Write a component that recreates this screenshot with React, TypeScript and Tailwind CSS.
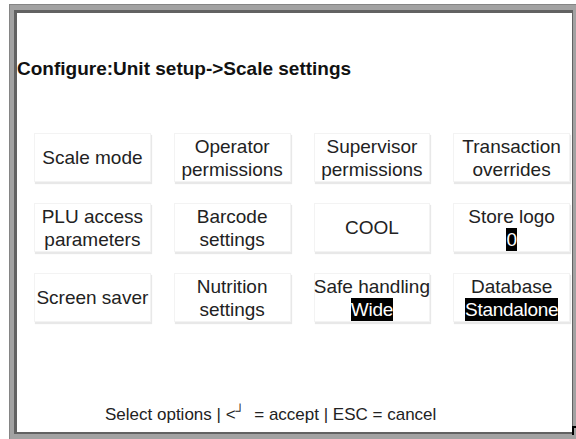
import React from "react";

const font = { fontFamily: '"Liberation Sans", Arial, sans-serif' };

type Item = { lines: string[]; value?: string };

const items: Item[] = [
  { lines: ["Scale mode"] },
  { lines: ["Operator", "permissions"] },
  { lines: ["Supervisor", "permissions"] },
  { lines: ["Transaction", "overrides"] },
  { lines: ["PLU access", "parameters"] },
  { lines: ["Barcode", "settings"] },
  { lines: ["COOL"] },
  { lines: ["Store logo"], value: "0" },
  { lines: ["Screen saver"] },
  { lines: ["Nutrition", "settings"] },
  { lines: ["Safe handling"], value: "Wide" },
  { lines: ["Database"], value: "Standalone" },
];

function Btn({ item }: { item: Item }) {
  return (
    <div className="h-[49px] bg-white border border-[#f3f3f3] shadow-[1px_2px_1px_rgba(0,0,0,0.09)] flex flex-col items-center justify-center text-[19px] leading-[23px] text-[#222]">
      {item.lines.map((l) => (
        <span key={l} className="whitespace-nowrap">
          {l}
        </span>
      ))}
      {item.value !== undefined && (
        <span className="bg-black text-white whitespace-nowrap tracking-[-0.3px]">
          {item.value}
        </span>
      )}
    </div>
  );
}

export default function App() {
  return (
    <div
      className="relative w-[576px] h-[439px] bg-white overflow-hidden pt-[4px] pl-[9px]"
      style={font}
    >
      <div className="w-[570px] h-[436px] bg-[#a2a2a2] border-t border-l border-[#858585] pt-[5px] pl-[4px] pr-[6px] pb-[6px] flex">
        <div className="flex-1 bg-white border-t-[3px] border-l-[3px] border-b-2 border-r border-[#626262] flex flex-col">
          <div className="mt-[45px] text-[19px] leading-[22px] font-bold text-[#111] whitespace-nowrap">
            Configure:Unit setup-&gt;Scale settings
          </div>
          <div className="mt-[53px] ml-[17px] w-[536px] grid grid-cols-4 gap-x-[23px] gap-y-[21px]">
            {items.map((it, i) => (
              <Btn key={i} item={it} />
            ))}
          </div>
          <div className="mt-auto mb-[6px] pl-[88px] text-[17px] leading-[20px] text-[#222] whitespace-pre">
            {"Select options | <"}
            <span className="relative top-[-5px] text-[13px]">┘</span>
            {"  = accept | ESC = cancel"}
          </div>
        </div>
      </div>
      <div className="absolute left-[572px] top-[426px] w-[6px] h-[9px] border-l-2 border-t-2 border-black" />
    </div>
  );
}
